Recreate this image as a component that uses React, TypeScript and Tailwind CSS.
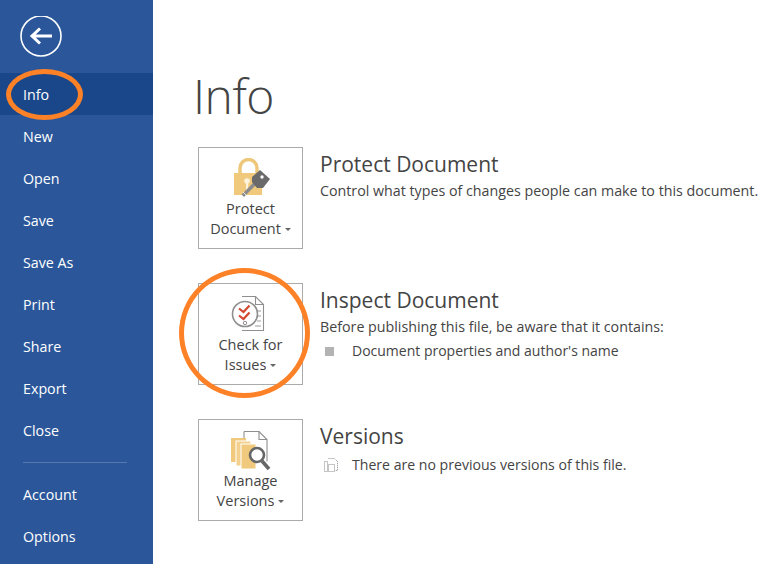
const navTop = ['Info', 'New', 'Open', 'Save', 'Save As', 'Print', 'Share', 'Export', 'Close'];
const navBottom = ['Account', 'Options'];

function NavItem({ label, active }: { label: string; active?: boolean }) {
  return (
    <div className={`h-[42px] flex items-center pl-[23px] pt-[2px] text-[14.25px] text-white ${active ? 'bg-[#19478a]' : ''}`}>
      {label}
    </div>
  );
}

function LockIcon() {
  return (
    <svg width="40" height="40" viewBox="0 0 40 40" className="block">
      <path d="M9 16v-6a8.5 8.5 0 0 1 17 0v6" fill="none" stroke="#eec77a" strokeWidth="3.4" />
      <rect x="3" y="15" width="28" height="22" fill="#f0c97c" />
      <circle cx="16" cy="23" r="2.8" fill="#fdf3dc" />
      <rect x="15" y="24" width="2.2" height="8" fill="#fdf3dc" />
      <path d="M13 39l-2.5-2.5 12-12 2.5 2.5z" fill="#8c8c8c" />
      <path d="M12 34l3 3" stroke="#fff" strokeWidth="0.8" />
      <path d="M21 19l8-7 10 9-7 9-6 0-5-6z" fill="#6a6a6a" />
      <circle cx="31" cy="19" r="1.7" fill="#fff" />
    </svg>
  );
}

function CheckIcon() {
  return (
    <svg width="40" height="40" viewBox="0 0 40 40" className="block">
      <path d="M11 2.5h13.5l8 8v26H11" fill="#fff" stroke="#8f8f8f" strokeWidth="1.1" />
      <path d="M24.5 2.5v8h8" fill="none" stroke="#8f8f8f" strokeWidth="1.1" />
      <path d="M26 17h4M26 22h4M26 27h4M24 32h6" stroke="#9a9a9a" strokeWidth="1.1" />
      <circle cx="14" cy="20" r="12.5" fill="#fff" stroke="#8f8f8f" strokeWidth="1.6" />
      <path d="M8 14.5l4.5 3.5 6-6.5M8 21.5l4.5 3.5 6-6.5" fill="none" stroke="#d2492f" strokeWidth="2.2" />
      <circle cx="14" cy="29" r="1.7" fill="#fff" stroke="#8f8f8f" />
    </svg>
  );
}

function VersionsIcon() {
  return (
    <svg width="42" height="42" viewBox="0 0 42 42" className="block">
      <path d="M14 1.5h15l8 8v22" fill="#fff" stroke="#8f8f8f" strokeWidth="1.1" />
      <path d="M14 1.5v7M29 1.5v8h8" fill="none" stroke="#8f8f8f" strokeWidth="1.1" />
      <rect x="1" y="8" width="15" height="24" fill="#f0c97c" />
      <rect x="6" y="11" width="15" height="25" fill="#f3d08d" stroke="#fff" strokeWidth="1" />
      <rect x="11" y="14" width="15" height="25" fill="#f0c97c" stroke="#fff" strokeWidth="1" />
      <circle cx="27" cy="25" r="7" fill="#fff" stroke="#666666" strokeWidth="2.6" />
      <path d="M32 31l7 8" stroke="#666666" strokeWidth="3.6" />
    </svg>
  );
}

function IconButton({ icon, line1, line2 }: { icon: React.ReactNode; line1: string; line2: string }) {
  return (
    <div className="w-[105px] h-[102px] shrink-0 border border-[#ababab] flex flex-col items-center pt-[10px] text-[14.5px] leading-[20px] text-[#444444]">
      <div className="h-[40px]">{icon}</div>
      <div className="mt-[1px]">{line1}</div>
      <div className="flex items-center">
        {line2}
        <span className="ml-[4px] mt-[1px] border-x-[3px] border-t-[3px] border-x-transparent border-t-[#666666]"></span>
      </div>
    </div>
  );
}

function Section({ icon, line1, line2, title, children }: {
  icon: React.ReactNode; line1: string; line2: string; title: string; children: React.ReactNode;
}) {
  return (
    <section className="flex h-[102px] whitespace-nowrap">
      <IconButton icon={icon} line1={line1} line2={line2} />
      <div className="ml-[17px] pt-[2px]">
        <h2 className="text-[21px] leading-[30px] text-[#444444]">{title}</h2>
        <div className="mt-[2px] text-[14.25px] leading-[20px] text-[#444444]">{children}</div>
      </div>
    </section>
  );
}

export default function App() {
  return (
    <div className="relative w-[776px] h-[564px] overflow-hidden flex bg-white font-['Open_Sans','Noto_Sans',sans-serif]">
      <aside className="w-[153px] shrink-0 bg-[#2b579a] pt-[16px]">
        <div className="ml-[20px] w-[42px] h-[40px] mb-[17px]">
          <svg width="42" height="42" viewBox="0 0 42 42" className="block">
            <circle cx="21" cy="20" r="20" fill="none" stroke="#fff" strokeWidth="1.6" />
            <path d="M32 20H13M20 12.5L12 20l8 7.5" fill="none" stroke="#fff" strokeWidth="3" />
          </svg>
        </div>
        {navTop.map((label) => (
          <NavItem key={label} label={label} active={label === 'Info'} />
        ))}
        <div className="mx-[23px] mt-[11px] mb-[10px] w-[104px] h-px bg-[#5479b0]"></div>
        {navBottom.map((label) => (
          <NavItem key={label} label={label} />
        ))}
      </aside>

      <main className="flex-1 pl-[45px] pt-[62px]">
        <h1 className="text-[48px] leading-[68px] tracking-[-0.5px] font-light text-[#444444] -ml-[5px]">Info</h1>
        <div className="mt-[17px] flex flex-col gap-[34px]">
          <Section icon={<LockIcon />} line1="Protect" line2="Document" title="Protect Document">
            Control what types of changes people can make to this document.
          </Section>
          <Section icon={<CheckIcon />} line1="Check for" line2="Issues" title="Inspect Document">
            <div>Before publishing this file, be aware that it contains:</div>
            <div className="flex items-center mt-[4px]">
              <span className="ml-[5px] w-[9px] h-[9px] bg-[#b3b3b3]"></span>
              <span className="ml-[18px] text-[14px]">Document properties and author's name</span>
            </div>
          </Section>
          <Section icon={<VersionsIcon />} line1="Manage" line2="Versions" title="Versions">
            <div className="flex items-center mt-[4px]">
              <svg width="16" height="16" viewBox="0 0 16 16" className="ml-[3px] block">
                <path d="M5.5 1.5h6l3 3v9h-2M1.5 4.5h3v10h-3zM5.5 7.5h6v7h-6z" fill="none" stroke="#8a8a8a" strokeDasharray="1 1" />
              </svg>
              <span className="ml-[13px] text-[14.1px]">There are no previous versions of this file.</span>
            </div>
          </Section>
        </div>
      </main>

      {/* hand drawn highlights on top of the screenshot */}
      <div className="absolute left-[6px] top-[69px] w-[77px] h-[51px] rounded-[50%] border-[5px] border-[#fd8127]"></div>
      <div className="absolute left-[179px] top-[268px] w-[131px] h-[130px] rounded-[50%] border-[5px] border-[#fd8127]"></div>
    </div>
  );
}
